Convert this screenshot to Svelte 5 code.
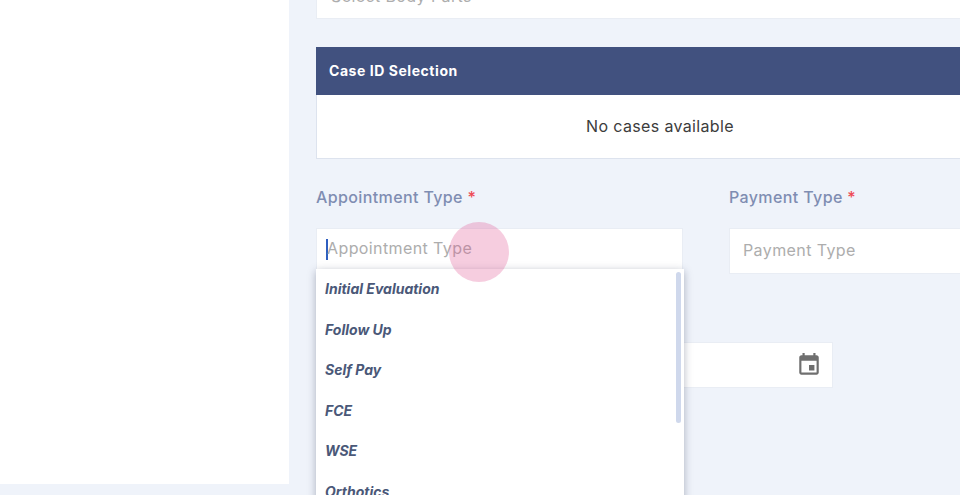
<script>
  const options = ['Initial Evaluation', 'Follow Up', 'Self Pay', 'FCE', 'WSE', 'Orthotics'];
</script>

<div class="page">
  <aside class="side"></aside>
  <main class="main">
    <div class="field top"><span class="ph">Select Body Parts</span></div>

    <section class="card">
      <header class="card-head">Case ID Selection</header>
      <div class="card-body">No cases available</div>
    </section>

    <div class="row">
      <div class="col first">
        <div class="label">Appointment Type <span class="req">*</span></div>
        <div class="field">
          <span class="caret"></span><span class="ph appt">Appointment Type</span>
        </div>
        <ul class="menu">
          {#each options as o}
            <li>{o}</li>
          {/each}
          <span class="thumb"></span>
        </ul>
      </div>
      <div class="col second">
        <div class="label">Payment Type <span class="req">*</span></div>
        <div class="field"><span class="ph pay">Payment Type</span></div>
      </div>
    </div>

    <div class="field date">
      <svg width="26" height="26" viewBox="0 0 24 24" aria-hidden="true">
        <path fill="#6f6f6f" d="M17 12h-5v5h5v-5zM16 1v2H8V1H6v2H5c-1.11 0-1.99.9-1.99 2L3 19c0 1.1.89 2 2 2h14c1.1 0 2-.9 2-2V5c0-1.1-.9-2-2-2h-1V1h-2zm3 18H5V8h14v11z"/>
      </svg>
    </div>
  </main>
  <span class="ripple"></span>
</div>

<style>
  :global(body) {
    margin: 0;
    background: #eff3fa;
  }
  .page {
    position: relative;
    display: flex;
    height: 495px;
    overflow: hidden;
    background: #eff3fa;
    font-family: Inter, "Open Sans", "Liberation Sans", sans-serif;
  }
  .side {
    flex: none;
    width: 289px;
    height: 484px;
    background: #fff;
  }
  .main {
    flex: none;
    width: 671px;
    box-sizing: border-box;
    padding-left: 27px;
    margin-top: -28px;
  }
  .field {
    box-sizing: border-box;
    display: flex;
    align-items: center;
    height: 46px;
    background: #fff;
    border: 1px solid #e9edf4;
  }
  .top {
    width: 700px;
    height: 47px;
    padding-left: 14px;
    margin-bottom: 28px;
  }
  .card {
    width: 700px;
    border: 1px solid #dde3ee;
    border-top: none;
    background: #fff;
  }
  .card-head {
    box-sizing: border-box;
    height: 48px;
    margin-left: -1px;
    padding: 0 0 2px 13px;
    display: flex;
    align-items: center;
    background: #41517f;
    color: #fff;
    font-size: 14px;
    font-weight: 700;
    letter-spacing: 0.55px;
  }
  .card-body {
    height: 63px;
    box-sizing: border-box;
    display: flex;
    align-items: center;
    justify-content: center;
    padding: 0 2px 2px 0;
    font-size: 16px;
    letter-spacing: 0.35px;
    color: #3c3c3c;
    width: 688px;
  }
  .row {
    display: flex;
    gap: 46px;
    margin-top: 27px;
    width: 800px;
  }
  .col {
    position: relative;
  }
  .first {
    width: 367px;
  }
  .second {
    width: 300px;
  }
  .label {
    height: 22px;
    margin-bottom: 20px;
    font-size: 16px;
    line-height: 22px;
    font-weight: 500;
    letter-spacing: 0.38px;
    color: #7f8db2;
  }
  .req {
    color: #ee4a55;
  }
  .ph {
    font-size: 16px;
    letter-spacing: 0.4px;
    color: #adadad;
  }
  .appt {
    position: relative;
    top: -3px;
    left: -1px;
  }
  .pay {
    margin-left: 13px;
    position: relative;
    top: -1px;
  }
  .first .field {
    padding-left: 9px;
  }
  .caret {
    width: 2px;
    height: 21px;
    background: #2f5fc0;
    position: relative;
    top: -2px;
  }
  .menu {
    position: absolute;
    left: 0;
    top: 83px;
    width: 368px;
    height: 240px;
    margin: 0;
    padding: 0;
    list-style: none;
    background: #fff;
    box-shadow: 0 2px 8px rgba(40, 50, 80, 0.35);
    z-index: 2;
  }
  .menu li {
    height: 40.5px;
    padding-left: 9px;
    line-height: 40px;
    font-size: 14px;
    font-weight: 700;
    font-style: italic;
    color: #4a5878;
  }
  .thumb {
    position: absolute;
    left: 360px;
    top: 3px;
    width: 5px;
    height: 151px;
    border-radius: 3px;
    background: #cfd8ec;
  }
  .date {
    justify-content: flex-end;
    width: 517px;
    margin-top: 68px;
    padding: 0 10px 1px 0;
  }
  .ripple {
    position: absolute;
    left: 449px;
    top: 222px;
    width: 60px;
    height: 60px;
    border-radius: 50%;
    background: rgba(226, 90, 150, 0.3);
    z-index: 3;
  }
</style>
